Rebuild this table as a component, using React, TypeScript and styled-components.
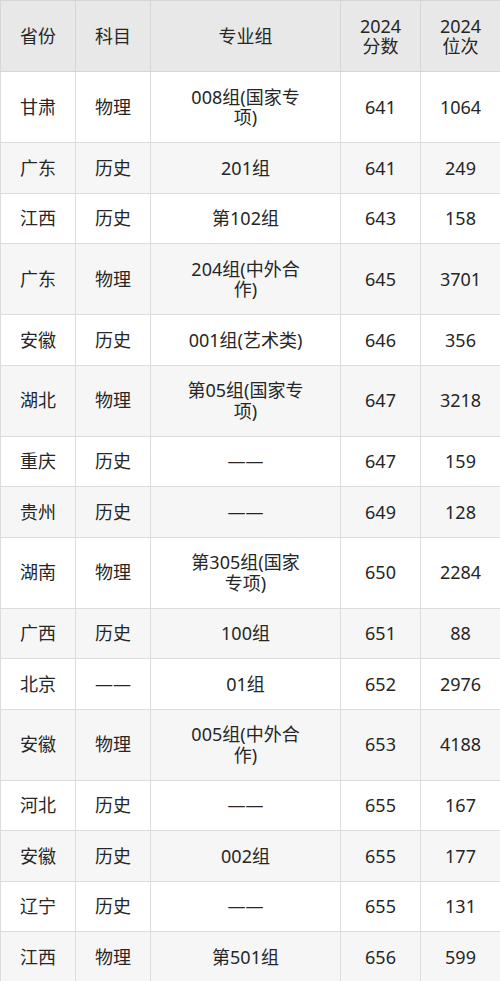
import React from "react";
import styled, { createGlobalStyle } from "styled-components";

const Global = createGlobalStyle`
  html, body { margin: 0; padding: 0; background: #ffffff; }
  body { font-family: "Noto Sans", "Noto Sans CJK SC", sans-serif; color: #262626; }
`;

const Table = styled.table`
  width: 500px;
  border-collapse: collapse;
  table-layout: fixed;
  font-size: 18px;
  line-height: 20.5px;
  border: 1.5px solid #dcdcdc;
`;

const HeadCell = styled.th`
  background: #e8e8e8;
  font-weight: 400;
  padding: 14.5px 4px;
  border: 1.5px solid #d6d6d6;
  text-align: center;
`;

const Row = styled.tr<{ $alt: boolean }>`
  background: ${(p) => (p.$alt ? "#f6f6f6" : "#ffffff")};
`;

const Cell = styled.td<{ $wide?: boolean }>`
  padding: 14.5px ${(p) => (p.$wide ? "35px" : "4px")};
  border: 1.5px solid #dcdcdc;
  text-align: center;
  word-break: break-all;
`;

const rows: [string, string, string, string, string][] = [
  ["甘肃", "物理", "008组(国家专项)", "641", "1064"],
  ["广东", "历史", "201组", "641", "249"],
  ["江西", "历史", "第102组", "643", "158"],
  ["广东", "物理", "204组(中外合作)", "645", "3701"],
  ["安徽", "历史", "001组(艺术类)", "646", "356"],
  ["湖北", "物理", "第05组(国家专项)", "647", "3218"],
  ["重庆", "历史", "——", "647", "159"],
  ["贵州", "历史", "——", "649", "128"],
  ["湖南", "物理", "第305组(国家专项)", "650", "2284"],
  ["广西", "历史", "100组", "651", "88"],
  ["北京", "——", "01组", "652", "2976"],
  ["安徽", "物理", "005组(中外合作)", "653", "4188"],
  ["河北", "历史", "——", "655", "167"],
  ["安徽", "历史", "002组", "655", "177"],
  ["辽宁", "历史", "——", "655", "131"],
  ["江西", "物理", "第501组", "656", "599"],
];

export default function App() {
  return (
    <>
      <Global />
      <Table>
        <colgroup>
          <col style={{ width: 75 }} />
          <col style={{ width: 75 }} />
          <col style={{ width: 190 }} />
          <col style={{ width: 80 }} />
          <col style={{ width: 80 }} />
        </colgroup>
        <thead>
          <tr>
            <HeadCell>省份</HeadCell>
            <HeadCell>科目</HeadCell>
            <HeadCell>专业组</HeadCell>
            <HeadCell>
              2024
              <br />
              分数
            </HeadCell>
            <HeadCell>
              2024
              <br />
              位次
            </HeadCell>
          </tr>
        </thead>
        <tbody>
          {rows.map((r, i) => (
            <Row key={i} $alt={i % 2 === 1}>
              <Cell>{r[0]}</Cell>
              <Cell>{r[1]}</Cell>
              <Cell $wide>{r[2]}</Cell>
              <Cell>{r[3]}</Cell>
              <Cell>{r[4]}</Cell>
            </Row>
          ))}
        </tbody>
      </Table>
    </>
  );
}
